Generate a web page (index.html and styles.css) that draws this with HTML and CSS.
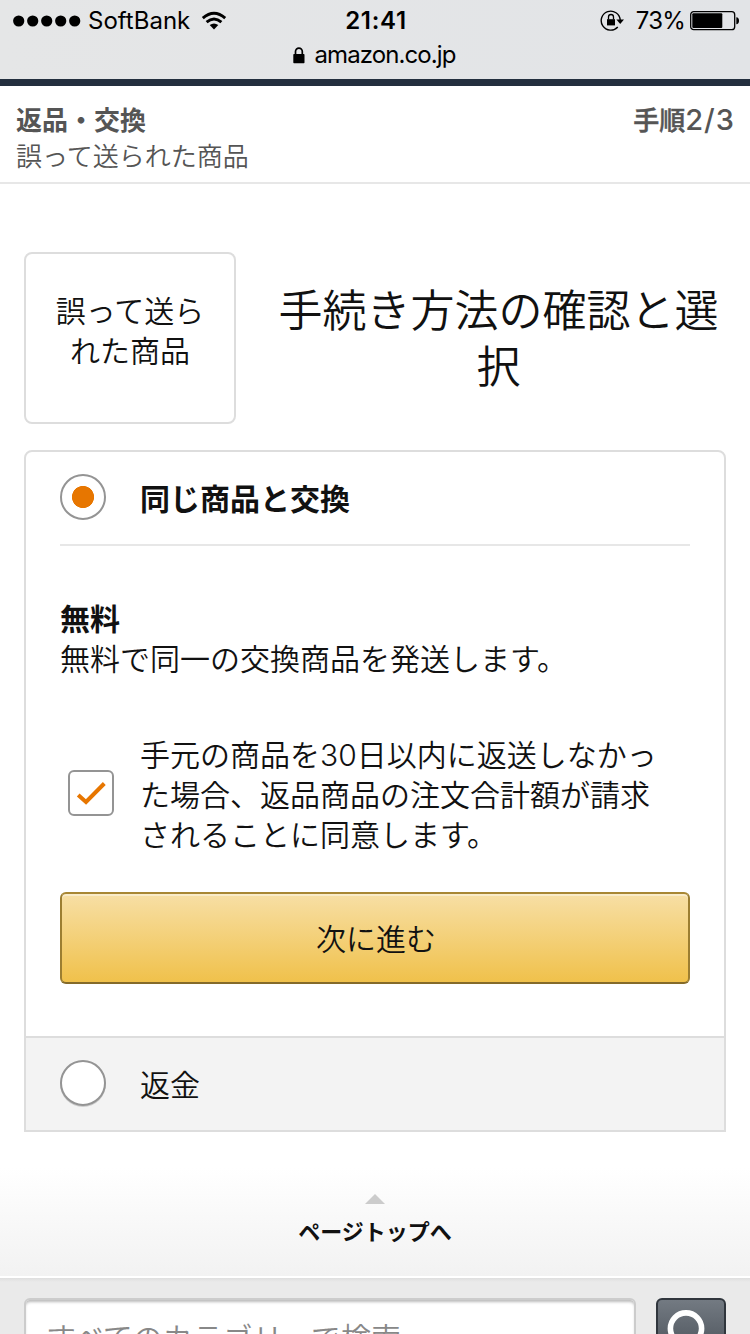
FILE: index.html
```html
<!DOCTYPE html>
<html lang="ja">
<head>
<meta charset="utf-8">
<title>返品・交換</title>
<link rel="stylesheet" href="styles.css">
</head>
<body>
<div class="screen">
  <div class="browser-bar">
    <div class="status">
      <div class="status-left">
        <svg class="signal" width="68" height="12" viewBox="0 0 68 12"><circle cx="5.7" cy="6" r="5.6"/><circle cx="19.7" cy="6" r="5.6"/><circle cx="33.7" cy="6" r="5.6"/><circle cx="47.7" cy="6" r="5.6"/><circle cx="61.7" cy="6" r="5.6"/></svg>
        <span class="carrier">SoftBank</span>
        <svg class="wifi" width="26" height="20" viewBox="0 0 26 20"><g fill="none" stroke="#000" stroke-width="2.9"><path d="M1.8 7.2Q13-2.8 24.2 7.2"/><path d="M5.6 11.2Q13 4.8 20.4 11.2"/></g><path d="M8.7 14.1Q13 10.8 17.3 14.1L13 18.5Z"/></svg>
      </div>
      <div class="clock">21:41</div>
      <div class="status-right">
        <svg class="rotation" width="24" height="22" viewBox="0 0 24 22"><path d="M20.2 10A9.5 9.5 0 1 0 17.8 17" fill="none" stroke="#000" stroke-width="1.4"/><path d="M16.4 9.4H24L20.2 14Z"/><path d="M7 9.2H15V15.4H7Z"/><path d="M8.5 9.5V7a2.5 2.5 0 0 1 5 0v2.5" fill="none" stroke="#000" stroke-width="1.3"/></svg>
        <span class="percent">73%</span>
        <svg class="battery" width="49" height="20" viewBox="0 0 49 20"><rect x=".7" y=".7" width="44" height="18" rx="3" fill="none" stroke="#000" stroke-width="1.3"/><rect x="2.3" y="2.3" width="30" height="14.8" rx="1"/><path d="M46.3 6.2Q49 6.5 49 9.7T46.3 13.2Z"/></svg>
      </div>
    </div>
    <div class="address">
      <svg width="12" height="17" viewBox="0 0 12 17"><rect x=".3" y="7" width="11.2" height="9.2" rx=".7"/><path d="M2.5 7.5V4.5a3.4 3.4 0 0 1 6.8 0v3" fill="none" stroke="#000" stroke-width="1.7"/></svg>
      <span>amazon.co.jp</span>
    </div>
  </div>

  <header class="page-header">
    <div>
      <div class="page-title">返品・交換</div>
      <div class="page-subtitle">誤って送られた商品</div>
    </div>
    <div class="page-step">手順<span class="step-count">2/3</span></div>
  </header>

  <main class="content">
    <section class="intro">
      <div class="reason">誤って送ら<br>れた商品</div>
      <h1 class="heading">手続き方法の確認と選<br>択</h1>
    </section>

    <section class="options">
      <div class="option">
        <div class="option-head">
          <span class="radio radio-on"></span>
          <span class="option-name">同じ商品と交換</span>
        </div>
        <div class="price">無料</div>
        <div class="detail">無料で同一の交換商品を発送します。</div>
        <div class="consent">
          <svg class="checkbox" width="46" height="46" viewBox="0 0 46 46"><rect x="1" y="1" width="44" height="44" rx="5" fill="#fff" stroke="#949494" stroke-width="2"/><path d="M10.2 25L18 32L36.3 13.5" fill="none" stroke="#e77600" stroke-width="4"/></svg>
          <div class="consent-text">手元の商品を30日以内に返送しなかっ<br>た場合、返品商品の注文合計額が請求<br>されることに同意します。</div>
        </div>
        <button class="proceed">次に進む</button>
      </div>
      <div class="option-closed">
        <span class="radio"></span>
        <span class="option-label">返金</span>
      </div>
    </section>
  </main>

  <div class="page-top">
    <svg width="20" height="10" viewBox="0 0 20 10"><path d="M0 10L10 0L20 10Z" fill="#ccc"/></svg>
    <div class="page-top-label">ページトップへ</div>
  </div>

  <div class="search">
    <div class="search-field">すべてのカテゴリーで検索</div>
    <div class="search-button"><svg width="66" height="60" viewBox="0 0 66 60"><circle cx="28" cy="28.5" r="15.6" fill="none" stroke="#fff" stroke-width="5.6"/><path d="M39 39L51 51" stroke="#fff" stroke-width="7"/></svg></div>
  </div>
</div>
</body>
</html>
```
FILE: styles.css
```css
* { box-sizing: border-box; }
body { margin: 0; background: #fff; }
svg { display: block; flex: none; }

.screen {
  width: 750px;
  height: 1334px;
  overflow: hidden;
  font-family: Inter, "Noto Sans CJK JP", "Noto Sans CJK JP DemiLight", sans-serif;
  font-size: 30px;
  font-weight: 350;
  line-height: 40px;
  color: #111;
  white-space: nowrap;
}

.browser-bar {
  height: 86px;
  background: linear-gradient(90deg, #e5e6e7, #e2e4e7);
  border-bottom: 7px solid #232f3e;
  color: #000;
  font-weight: 400;
}
.status {
  display: grid;
  grid-template-columns: 1fr auto 1fr;
  height: 41px;
  padding: 0 11px 0 13px;
  font-size: 24px;
  line-height: 41px;
}
.status-left, .status-right { display: flex; align-items: center; }
.status-right { justify-content: flex-end; }
.carrier { margin-left: 7px; }
.wifi { margin-left: 11px; }
.clock { font-weight: 600; letter-spacing: .7px; }
.percent { margin: 0 5px 0 12px; letter-spacing: -.8px; }
.address {
  display: flex;
  justify-content: center;
  align-items: center;
  gap: 9px;
  height: 28px;
  padding-right: 1px;
  font-size: 24px;
  letter-spacing: -.9px;
}

.page-header {
  display: flex;
  justify-content: space-between;
  height: 98px;
  padding: 17px 16px 0;
  border-bottom: 2px solid #e7e7e7;
  color: #555;
  font-size: 26px;
  line-height: 36px;
}
.page-title { font-weight: 700; }
.page-step { font-weight: 500; -webkit-text-stroke: .5px #555; }
.step-count { font-size: 29px; line-height: 34px; letter-spacing: 1px; margin-right: -1px; -webkit-text-stroke: 0; }

.content { padding: 68px 24px 0; }
.intro { display: flex; height: 172px; }
.reason {
  width: 212px;
  padding-top: 37px;
  border: 2px solid #ddd;
  border-radius: 8px;
  text-align: center;
}
.heading {
  flex: 1;
  margin: 0 0 0 35px;
  padding-top: 31px;
  font-size: 44px;
  font-weight: inherit;
  line-height: 56px;
  text-align: center;
}

.options {
  height: 682px;
  margin-top: 26px;
  border: 2px solid #ddd;
  border-radius: 8px 8px 0 0;
}
.option { height: 584px; padding: 0 34px; }
.option-head {
  display: flex;
  align-items: center;
  gap: 34px;
  height: 94px;
  padding-bottom: 2px;
  border-bottom: 2px solid #e7e7e7;
}
.option-name { padding-top: 3px; font-weight: 700; }
.radio {
  width: 46px;
  height: 46px;
  border: 2px solid #949494;
  border-radius: 50%;
  background: #fff;
}
.radio-on { background: radial-gradient(circle, #e77600 10.7px, #fff 11.4px); }
.price { margin-top: 53px; font-weight: 700; }
.consent {
  display: flex;
  align-items: center;
  gap: 26px;
  margin-top: 56px;
  padding-left: 8px;
}
.checkbox { margin-top: -5px; }
.proceed {
  display: block;
  width: 100%;
  height: 92px;
  margin-top: 37px;
  padding: 2px 0 0 2px;
  border: 2px solid;
  border-color: #a88734 #9c7e31 #846a29;
  border-radius: 6px;
  background: linear-gradient(#f7dfa5, #f0c14b);
  box-shadow: inset 0 2px 0 rgba(255, 255, 255, .4);
  color: #111;
  font: inherit;
}
.option-closed {
  display: flex;
  align-items: center;
  gap: 34px;
  height: 94px;
  padding: 0 34px 2px;
  border-top: 2px solid #ddd;
  background: #f3f3f3;
}
.option-closed .radio { box-shadow: 0 1px 0 #ccc; }
.option-label { padding-top: 4px; }

.page-top {
  display: flex;
  flex-direction: column;
  align-items: center;
  height: 146px;
  padding-top: 62px;
  border-bottom: 2px solid #fff;
  background: linear-gradient(#fff 25%, #f2f2f2);
}
.page-top-label {
  margin-top: 13px;
  font-size: 22px;
  font-weight: 700;
  line-height: 30px;
}

.search {
  display: flex;
  gap: 20px;
  height: 100px;
  padding: 20px 24px;
  background: linear-gradient(#dedede, #eaeaea 4px);
}
.search-field {
  width: 612px;
  padding: 18px 20px;
  border: 2px solid #ccc;
  border-radius: 6px;
  background: #fff;
  box-shadow: inset 0 3px 3px -1px #bbb;
  color: #888;
}
.search-button {
  width: 70px;
  border: 2px solid #30363d;
  border-radius: 6px;
  background: linear-gradient(#737a82, #4b525a);
}
```
